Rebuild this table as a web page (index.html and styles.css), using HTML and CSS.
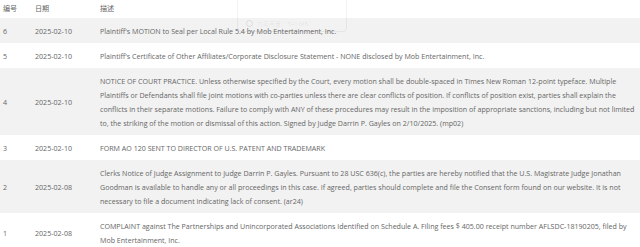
FILE: index.html
```html
<!DOCTYPE html>
<html lang="zh-CN">
<head>
    <meta charset="UTF-8">
    <meta name="viewport" content="width=device-width, initial-scale=1.0">
    <title>案件记录</title>
    <link rel="stylesheet" href="styles.css">
</head>
<body>
    <table class="docket">
        <colgroup>
            <col class="col-no">
            <col class="col-date">
            <col class="col-desc">
        </colgroup>
        <thead>
            <tr>
                <th>编号</th>
                <th>日期</th>
                <th>描述</th>
            </tr>
        </thead>
        <tbody>
            <tr>
                <td>6</td>
                <td>2025-02-10</td>
                <td>Plaintiff's MOTION to Seal per Local Rule 5.4 by Mob Entertainment, Inc.</td>
            </tr>
            <tr>
                <td>5</td>
                <td>2025-02-10</td>
                <td>Plaintiff's Certificate of Other Affiliates/Corporate Disclosure Statement - NONE disclosed by Mob Entertainment, Inc.</td>
            </tr>
            <tr>
                <td>4</td>
                <td>2025-02-10</td>
                <td>NOTICE OF COURT PRACTICE. Unless otherwise specified by the Court, every motion shall be double-spaced in Times New Roman 12-point typeface. Multiple Plaintiffs or Defendants shall file joint motions with co-parties unless there are clear conflicts of position. If conflicts of position exist, parties shall explain the conflicts in their separate motions. Failure to comply with ANY of these procedures may result in the imposition of appropriate sanctions, including but not limited to, the striking of the motion or dismissal of this action. Signed by Judge Darrin P. Gayles on 2/10/2025. (mp02)</td>
            </tr>
            <tr>
                <td>3</td>
                <td>2025-02-10</td>
                <td>FORM AO 120 SENT TO DIRECTOR OF U.S. PATENT AND TRADEMARK</td>
            </tr>
            <tr>
                <td>2</td>
                <td>2025-02-08</td>
                <td>Clerks Notice of Judge Assignment to Judge Darrin P. Gayles. Pursuant to 28 USC 636(c), the parties are hereby notified that the U.S. Magistrate Judge Jonathan Goodman is available to handle any or all proceedings in this case. If agreed, parties should complete and file the Consent form found on our website. It is not necessary to file a document indicating lack of consent. (ar24)</td>
            </tr>
            <tr>
                <td>1</td>
                <td>2025-02-08</td>
                <td>COMPLAINT against The Partnerships and Unincorporated Associations Identified on Schedule A. Filing fees $ 405.00 receipt number AFLSDC-18190205, filed by Mob Entertainment, Inc.</td>
            </tr>
        </tbody>
    </table>

    <!-- tab hover card left over from the browser, mostly faded out -->
    <div class="hover-card">
        <span class="hover-icon"></span>
        <span>内存用量：340 MB</span>
    </div>
</body>
</html>
```

FILE: styles.css
```css
body {
    margin: 0;
    font-family: "Open Sans", "Noto Sans CJK SC", sans-serif;
    font-size: 7.1px;
    color: #666;
    background: #fff;
}

.docket {
    width: 100%;
    border-collapse: collapse;
    table-layout: fixed;
}

.col-no {
    width: 32px;
}

.col-date {
    width: 65px;
}

.docket th {
    text-align: left;
    font-weight: normal;
    padding: 2px 3px 3px;
    line-height: 13px;
    vertical-align: middle;
}

.docket td {
    padding: 5.5px 3px;
    line-height: 14px;
    vertical-align: middle;
}

.docket td:last-child {
    padding-right: 2px;
}

.docket tbody tr:nth-child(odd) {
    background: #f2f2f2;
}

.hover-card {
    position: absolute;
    top: -4px;
    left: 237px;
    width: 110px;
    height: 36px;
    box-sizing: border-box;
    padding: 18px 0 0 8px;
    display: flex;
    align-items: center;
    gap: 4px;
    border: 1px solid rgba(0, 0, 0, 0.05);
    border-radius: 4px;
    font-size: 6px;
    color: rgba(0, 0, 0, 0.08);
}

.hover-icon {
    width: 5px;
    height: 5px;
    border-radius: 50%;
    border: 1px solid rgba(0, 0, 0, 0.08);
}
```
